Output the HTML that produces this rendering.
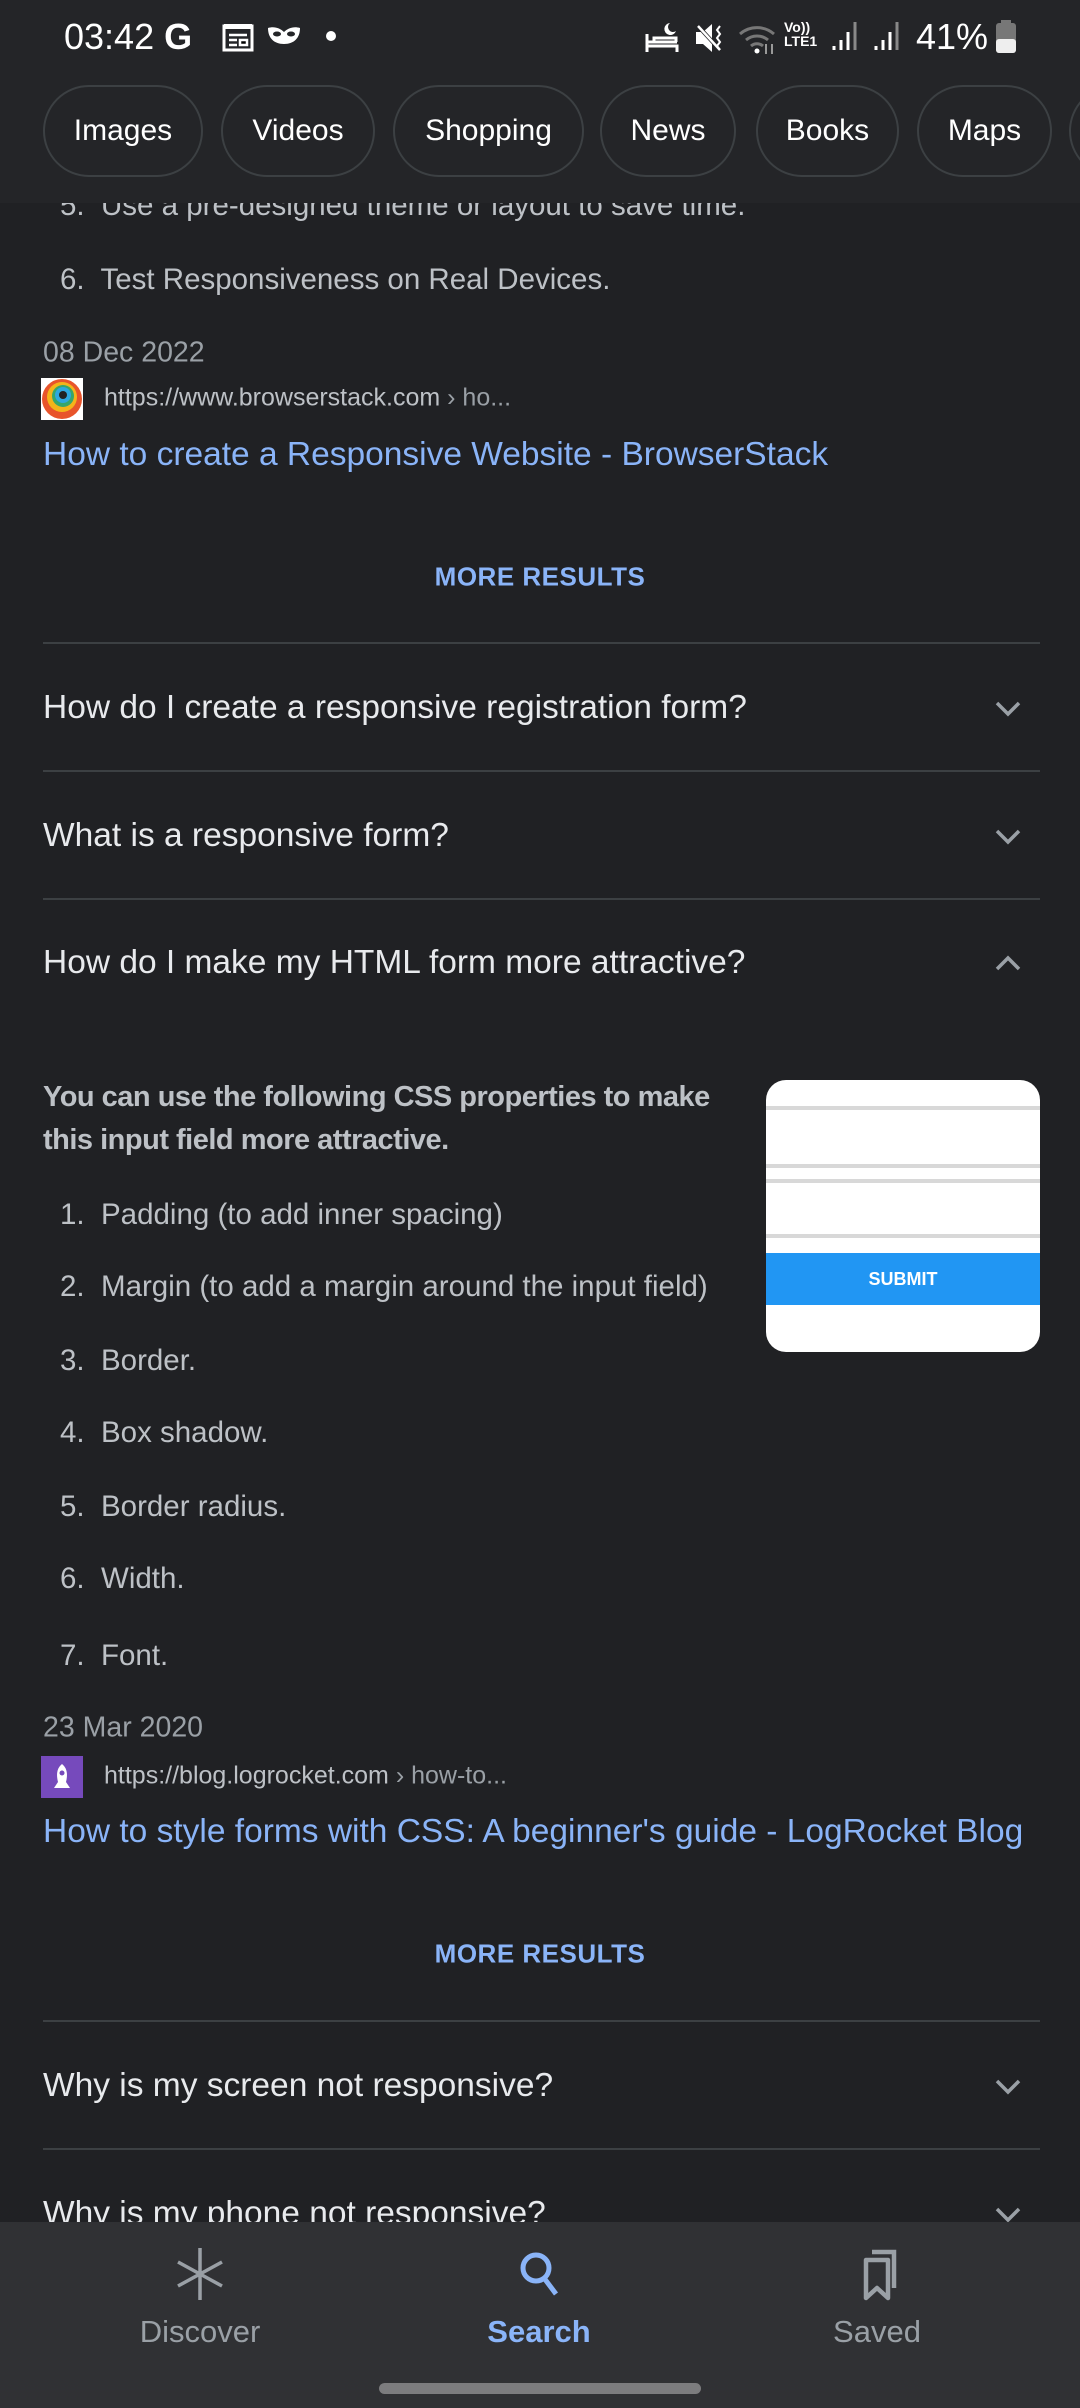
<!DOCTYPE html>
<html><head><meta charset="utf-8"><style>
*{margin:0;padding:0;box-sizing:border-box}
body{width:1080px;height:2408px;background:#202124;font-family:"Liberation Sans",Roboto,sans-serif;position:relative;overflow:hidden;color:#bdc1c6}
.a{position:absolute;white-space:nowrap}
.hdr{position:absolute;left:0;top:0;width:1080px;height:203px;background:#242528;z-index:5}
.pill{position:absolute;top:85px;height:92px;border:2px solid #3c4043;border-radius:46px;color:#fff;font-size:30px;display:flex;align-items:center;justify-content:center}
.li{position:absolute;left:60px;font-size:29.5px;color:#bdc1c6;transform:translateY(-50%)}
.q{position:absolute;left:43px;font-size:33.5px;color:#e8eaed;transform:translateY(-50%)}
.div{position:absolute;left:43px;width:997px;height:2px;background:#3c4043}
.chev{position:absolute;left:994px;width:28px;height:28px}
.more{position:absolute;left:0;width:1080px;text-align:center;font-size:26px;font-weight:bold;color:#8ab4f8;transform:translateY(-50%);letter-spacing:0.5px}
.date{position:absolute;left:43px;font-size:28.5px;color:#9aa0a6;transform:translateY(-50%)}
.url{position:absolute;left:104px;font-size:25px;color:#bdc1c6;transform:translateY(-50%)}
.ttl{position:absolute;left:43px;font-size:33.5px;color:#8ab4f8;transform:translateY(-50%)}
.nav{position:absolute;left:0;top:2222px;width:1080px;height:186px;background:#303134;z-index:5}
.lbl{position:absolute;top:2332px;font-size:31px;transform:translate(-50%,-50%);z-index:6}
</style></head><body>
<div class="hdr">
 <div class="a" style="left:64px;top:16px;font-size:36px;color:#fff">03:42 <b>G</b></div>
 <svg class="a" style="left:222px;top:22px" width="34" height="30"><rect x="2" y="4" width="28" height="24" fill="none" stroke="#fff" stroke-width="3"/><rect x="2" y="2" width="28" height="5" fill="#fff"/><path d="M7 13h18M7 18h8M7 23h8M18 18h7v5h-7z" stroke="#fff" stroke-width="2.5"/></svg>
 <svg class="a" style="left:266px;top:24px" width="36" height="24"><path d="M2 4c6-2 12 0 16 4 4-4 10-6 16-4 0 10-6 16-16 16S2 14 2 4z" fill="#fff"/><ellipse cx="11" cy="10" rx="4" ry="2.5" fill="#242528"/><ellipse cx="25" cy="10" rx="4" ry="2.5" fill="#242528"/></svg>
 <div class="a" style="left:326px;top:31px;width:10px;height:10px;border-radius:5px;background:#fff"></div>
 <svg class="a" style="left:644px;top:20px" width="36" height="34"><path d="M3 14v18M3 26h30v6M3 22h30M10 22v-4h22v4" stroke="#fff" stroke-width="3" fill="none"/><path d="M26 3a6 6 0 1 0 6 8 5 5 0 0 1-6-8z" fill="#fff"/></svg>
 <svg class="a" style="left:694px;top:22px" width="34" height="32"><path d="M2 10h7l9-8v28l-9-8H2z" fill="#fff"/><path d="M4 4l22 24" stroke="#242528" stroke-width="4"/><path d="M4 4l22 24" stroke="#fff" stroke-width="2.5"/><path d="M26 4l-3 4 3 4-3 4 3 4-3 4 3 4" stroke="#fff" stroke-width="2" fill="none"/></svg>
 <svg class="a" style="left:738px;top:22px" width="42" height="32"><path d="M2 12a26 26 0 0 1 34 0M8 18a17 17 0 0 1 22 0M13 24a9 9 0 0 1 12 0" stroke="#777" stroke-width="3" fill="none"/><circle cx="19" cy="29" r="2.5" fill="#fff"/><path d="M28 22v10M34 32V22" stroke="#999" stroke-width="2"/></svg>
 <div class="a" style="left:784px;top:20px;font-size:14px;color:#fff;line-height:14px;font-weight:bold">Vo))<br>LTE1</div>
 <svg class="a" style="left:830px;top:20px" width="32" height="32"><path d="M4 30v-4M11 30v-10M18 30V12" stroke="#fff" stroke-width="3"/><path d="M25 30V2" stroke="#888" stroke-width="3"/></svg>
 <svg class="a" style="left:872px;top:20px" width="32" height="32"><path d="M4 30v-4M11 30v-10M18 30V12" stroke="#fff" stroke-width="3"/><path d="M25 30V2" stroke="#888" stroke-width="3"/></svg>
 <div class="a" style="left:916px;top:16px;font-size:36px;color:#fff">41%</div>
 <svg class="a" style="left:995px;top:20px" width="22" height="34"><rect x="6" y="0" width="10" height="4" fill="#777"/><rect x="1" y="3" width="20" height="30" rx="3" fill="#777"/><rect x="1" y="19" width="20" height="14" rx="3" fill="#eee"/></svg>
 <div class="pill" style="left:43px;width:160px">Images</div>
 <div class="pill" style="left:221px;width:154px">Videos</div>
 <div class="pill" style="left:393px;width:191px">Shopping</div>
 <div class="pill" style="left:600px;width:136px">News</div>
 <div class="pill" style="left:756px;width:143px">Books</div>
 <div class="pill" style="left:917px;width:135px">Maps</div>
 <div class="pill" style="left:1069px;width:135px"></div>
</div>

<div class="li" style="top:206px">5.&nbsp; Use a pre-designed theme or layout to save time.</div>
<div class="li" style="top:280px">6.&nbsp; Test Responsiveness on Real Devices.</div>
<div class="date" style="top:353px">08 Dec 2022</div>
<svg class="a" style="left:41px;top:378px" width="42" height="42"><rect width="42" height="42" fill="#fff"/><circle cx="21" cy="21" r="20" fill="#e8542b"/><circle cx="21" cy="19" r="15" fill="#f4b41a"/><circle cx="22" cy="18" r="11" fill="#37a66a"/><circle cx="22" cy="17" r="8" fill="#2ea8df"/><circle cx="22" cy="17" r="4" fill="#222"/></svg>
<div class="url" style="top:398px">https://www.browserstack.com <span style="color:#9aa0a6">› ho...</span></div>
<div class="ttl" style="top:455px">How to create a Responsive Website - BrowserStack</div>
<div class="more" style="top:577px">MORE RESULTS</div>
<div class="div" style="top:642px"></div>
<div class="q" style="top:708px">How do I create a responsive registration form?</div>
<svg class="chev" style="top:694px" viewBox="0 0 28 28"><path d="M3 9l11 11 11-11" stroke="#9aa0a6" stroke-width="3.5" fill="none"/></svg>
<div class="div" style="top:770px"></div>
<div class="q" style="top:836px">What is a responsive form?</div>
<svg class="chev" style="top:822px" viewBox="0 0 28 28"><path d="M3 9l11 11 11-11" stroke="#9aa0a6" stroke-width="3.5" fill="none"/></svg>
<div class="div" style="top:898px"></div>
<div class="q" style="top:963px">How do I make my HTML form more attractive?</div>
<svg class="chev" style="top:949px" viewBox="0 0 28 28"><path d="M3 20l11-11 11 11" stroke="#9aa0a6" stroke-width="3.5" fill="none"/></svg>

<div class="a" style="left:43px;top:1076px;font-size:29px;font-weight:bold;color:#bdc1c6;line-height:43px;letter-spacing:-0.5px">You can use the following CSS properties to make<br>this input field more attractive.</div>
<div class="a" style="left:766px;top:1080px;width:274px;height:272px;background:#fff;border-radius:20px;overflow:hidden">
 <div class="a" style="left:0;top:26px;width:274px;height:4px;background:#d8d8d8"></div>
 <div class="a" style="left:0;top:84px;width:274px;height:4px;background:#d8d8d8"></div>
 <div class="a" style="left:0;top:99px;width:274px;height:4px;background:#d8d8d8"></div>
 <div class="a" style="left:0;top:154px;width:274px;height:4px;background:#d8d8d8"></div>
 <div class="a" style="left:0;top:173px;width:274px;height:52px;background:#2196f3;color:#fff;font-weight:bold;font-size:18px;text-align:center;line-height:52px">SUBMIT</div>
</div>
<div class="li" style="top:1215px">1.&nbsp; Padding (to add inner spacing)</div>
<div class="li" style="top:1287px">2.&nbsp; Margin (to add a margin around the input field)</div>
<div class="li" style="top:1361px">3.&nbsp; Border.</div>
<div class="li" style="top:1433px">4.&nbsp; Box shadow.</div>
<div class="li" style="top:1507px">5.&nbsp; Border radius.</div>
<div class="li" style="top:1579px">6.&nbsp; Width.</div>
<div class="li" style="top:1656px">7.&nbsp; Font.</div>
<div class="date" style="top:1728px">23 Mar 2020</div>
<svg class="a" style="left:41px;top:1756px" width="42" height="42"><rect width="42" height="42" fill="#764abc"/><path d="M21 8c5 4 6 10 4 18h-8c-2-8-1-14 4-18z" fill="#fff"/><path d="M17 26l-4 6h16l-4-6z" fill="#fff"/><circle cx="21" cy="17" r="2.5" fill="#764abc"/></svg>
<div class="url" style="top:1776px">https://blog.logrocket.com <span style="color:#9aa0a6">› how-to...</span></div>
<div class="ttl" style="top:1832px">How to style forms with CSS: A beginner's guide - LogRocket Blog</div>
<div class="more" style="top:1954px">MORE RESULTS</div>
<div class="div" style="top:2020px"></div>
<div class="q" style="top:2086px">Why is my screen not responsive?</div>
<svg class="chev" style="top:2072px" viewBox="0 0 28 28"><path d="M3 9l11 11 11-11" stroke="#9aa0a6" stroke-width="3.5" fill="none"/></svg>
<div class="div" style="top:2148px"></div>
<div class="q" style="top:2214px">Why is my phone not responsive?</div>
<svg class="chev" style="top:2200px" viewBox="0 0 28 28"><path d="M3 9l11 11 11-11" stroke="#9aa0a6" stroke-width="3.5" fill="none"/></svg>

<div class="nav"></div>
<svg class="a" style="left:172px;top:2246px;z-index:6" width="56" height="56" viewBox="0 0 56 56"><path d="M28 2v52M6 16l44 24M6 40l44-24" stroke="#9aa0a6" stroke-width="3.5"/></svg>
<svg class="a" style="left:512px;top:2246px;z-index:6" width="56" height="56" viewBox="0 0 56 56"><circle cx="24" cy="22" r="13" stroke="#8ab4f8" stroke-width="5" fill="none"/><path d="M32 32l12 16" stroke="#8ab4f8" stroke-width="5"/></svg>
<svg class="a" style="left:852px;top:2246px;z-index:6" width="56" height="56" viewBox="0 0 56 56"><path d="M14 14h22v38l-11-10-11 10z" stroke="#9aa0a6" stroke-width="4.5" fill="none" stroke-linejoin="round"/><path d="M20 6h22v36" stroke="#9aa0a6" stroke-width="4.5" fill="none"/></svg>
<div class="lbl" style="left:200px;color:#9aa0a6">Discover</div>
<div class="lbl" style="left:539px;color:#8ab4f8;font-weight:bold">Search</div>
<div class="lbl" style="left:877px;color:#9aa0a6">Saved</div>
<div class="a" style="left:379px;top:2383px;width:322px;height:11px;border-radius:6px;background:#7c7c7e;z-index:6"></div>
</body></html>
